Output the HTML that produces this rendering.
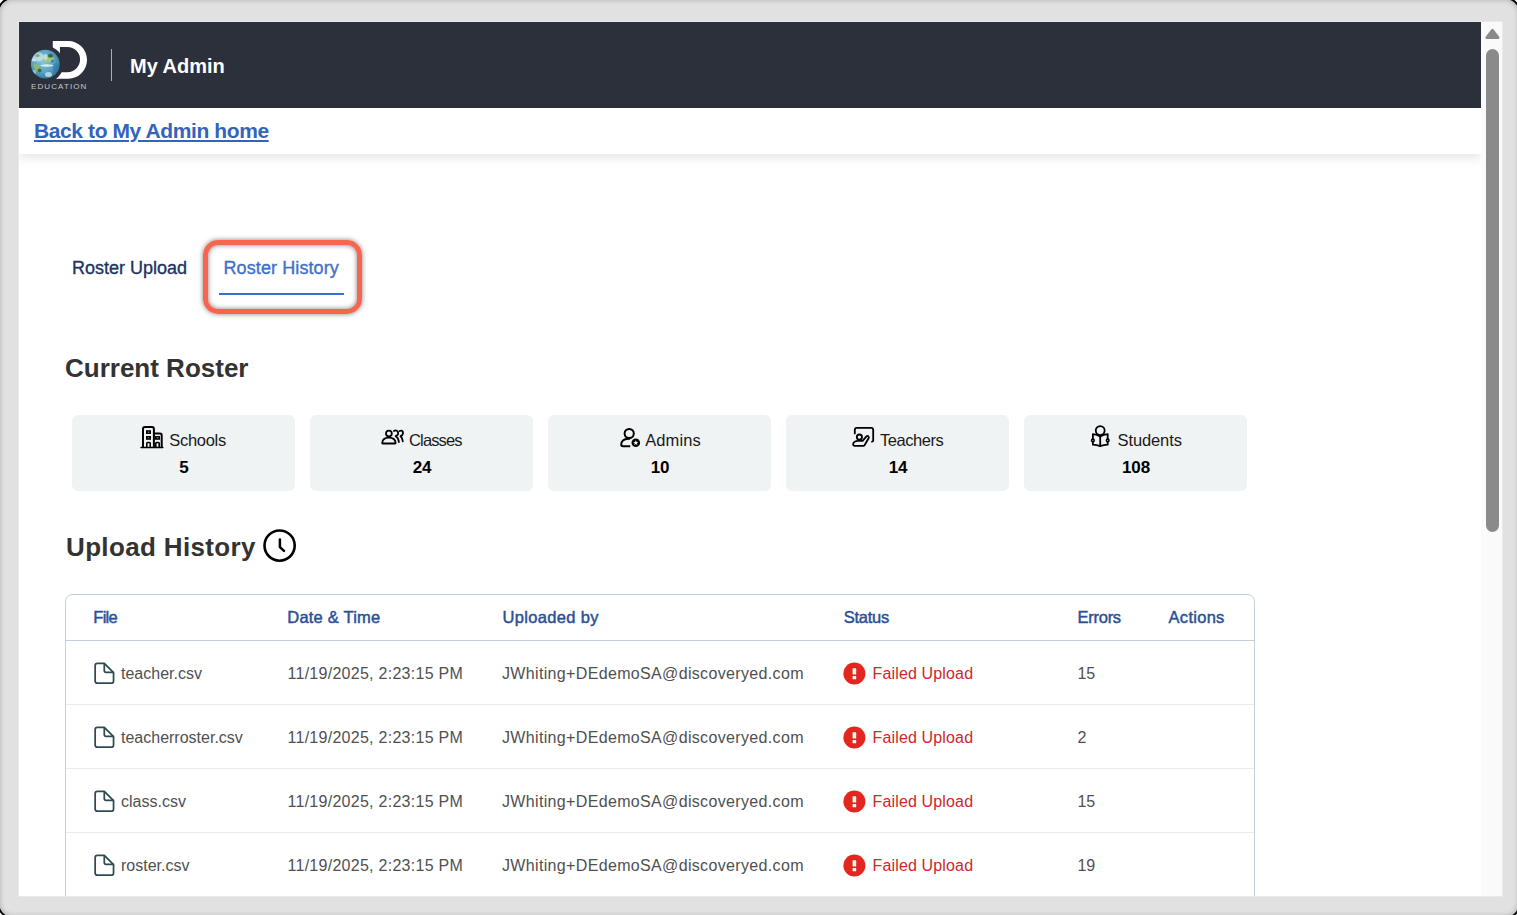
<!DOCTYPE html>
<html><head><meta charset="utf-8">
<style>
*{box-sizing:border-box;margin:0;padding:0}
html,body{width:1517px;height:915px;overflow:hidden;background:#fff;font-family:"Liberation Sans",sans-serif}
#frame{position:absolute;left:-3.5px;top:-3.5px;width:1524px;height:922px;background:#e1e1e1;border:2.2px solid #000;border-radius:16px;box-shadow:inset 0 0 5px 1px rgba(0,0,0,.22)}
#win{position:absolute;left:0;top:0;width:1517px;height:915px;clip-path:inset(22px 15px 19px 19px)}
#white{position:absolute;left:19px;top:22px;width:1483px;height:874px;background:#fff}
#edge{position:absolute;left:18px;top:21px;width:1485px;height:876px;border:1px solid #e9e9e9}
.a{position:absolute;white-space:nowrap;line-height:1}
svg{position:absolute;overflow:visible}
.card{position:absolute;top:415px;width:223px;height:76px;background:#f0f3f4;border-radius:6px}
.lbl{font-size:16.5px;color:#1a1a1a}
.num{font-size:17px;font-weight:700;color:#000}
.th{font-size:16.5px;font-weight:400;color:#2a4f96;-webkit-text-stroke:0.45px #2a4f96}
.td{font-size:16px;color:#505050}
.fail{font-size:16px;color:#d0262a}
</style></head><body>
<div id="frame"></div><div id="edge"></div>
<div id="win">
  <div id="white"></div>
  <!-- header -->
  <div class="a" style="left:19px;top:22px;width:1462px;height:86px;background:#2c303b"></div>
  <svg style="left:0;top:0" width="100" height="100" viewBox="0 0 100 100">
    <defs>
      <radialGradient id="gl" cx="0.42" cy="0.4" r="0.65">
        <stop offset="0" stop-color="#8cc6da"/>
        <stop offset="0.6" stop-color="#56a2c6"/>
        <stop offset="1" stop-color="#2d729a"/>
      </radialGradient>
      <mask id="dm">
        <rect x="0" y="0" width="100" height="100" fill="#fff"/>
        <circle cx="45.3" cy="64.1" r="18.3" fill="#000"/>
      </mask>
      <clipPath id="gc"><circle cx="45.3" cy="64.1" r="14.4"/></clipPath>
      <filter id="gb" x="-20%" y="-20%" width="140%" height="140%"><feGaussianBlur stdDeviation="0.55"/></filter>
    </defs>
    <path mask="url(#dm)" fill="#fff" fill-rule="evenodd" d="M52.8 41 H68.2 A18.85 18.85 0 0 1 68.2 78.7 H50 V60 H52.8 Z M59.9 46.9 H67.4 A12.65 12.65 0 0 1 67.4 72.2 H55 V60 H59.9 Z"/>
    <circle cx="45.3" cy="64.1" r="14.4" fill="url(#gl)"/>
    <g clip-path="url(#gc)"><g filter="url(#gb)">
      <ellipse cx="38" cy="57" rx="6" ry="4.5" fill="#e2f0f0" opacity=".6"/>
      <ellipse cx="37.5" cy="55.5" rx="2.2" ry="1.5" fill="#7ea85a" opacity=".85"/>
      <ellipse cx="33.5" cy="60" rx="2" ry="1.6" fill="#e6f2f2" opacity=".7"/>
      <ellipse cx="49" cy="59.5" rx="5" ry="2.6" transform="rotate(-15 49 59.5)" fill="#a3c67c"/>
      <ellipse cx="45.5" cy="57" rx="2" ry="3" fill="#cfe6d8" opacity=".8"/>
      <ellipse cx="50.5" cy="55.8" rx="2.6" ry="2" fill="#3e6b35"/>
      <ellipse cx="52.5" cy="61" rx="1.5" ry="1.5" fill="#3d7fa0"/>
      <ellipse cx="47" cy="65.5" rx="6.5" ry="1.2" fill="#eef7f8" opacity=".85"/>
      <ellipse cx="37" cy="68" rx="2.4" ry="4.5" transform="rotate(-30 37 68)" fill="#8fb86a"/>
      <ellipse cx="39.5" cy="70.5" rx="2" ry="2" fill="#3f6e34"/>
      <ellipse cx="48.5" cy="74.5" rx="3.5" ry="2.5" fill="#d4e8ec" opacity=".75"/>
      <ellipse cx="34" cy="72" rx="2" ry="2" fill="#cfe5ea" opacity=".6"/>
      <ellipse cx="56" cy="68" rx="3" ry="5" fill="#2f74a0" opacity=".5"/>
    </g></g>
  </svg>
  <div class="a" style="left:31px;top:83px;font-size:8px;letter-spacing:1.1px;color:#c8c8c8">EDUCATION</div>
  <div class="a" style="left:111px;top:49px;width:1px;height:32px;background:#9fb2ba"></div>
  <div class="a" style="left:130px;top:55.8px;font-size:20px;font-weight:700;color:#fff">My Admin</div>

  <!-- link bar -->
  <div class="a" style="left:19px;top:108px;width:1462px;height:46px;background:#fff;box-shadow:0 4px 10px rgba(0,0,0,.10)"></div>
  <div class="a" style="left:34px;top:120px;font-size:21px;letter-spacing:-0.4px;font-weight:700;color:#3264bb;text-decoration:underline;text-decoration-thickness:2px;text-underline-offset:2px">Back to My Admin home</div>

  <!-- scrollbar -->
  <div class="a" style="left:1481px;top:22px;width:21px;height:874px;background:#fafafa"></div>
  <svg style="left:1485px;top:28px" width="15" height="12" viewBox="0 0 15 12"><path d="M7.45 2.4 L13 9.6 L1.9 9.6 Z" fill="#8a8a8a" stroke="#8a8a8a" stroke-width="3" stroke-linejoin="round"/></svg>
  <div class="a" style="left:1486px;top:49px;width:13px;height:483px;background:#8a8a8a;border-radius:6.5px"></div>

  <!-- tabs -->
  <div class="a" style="left:72px;top:258.6px;font-size:18px;color:#1d3461;-webkit-text-stroke:0.35px #1d3461">Roster Upload</div>
  <div class="a" style="left:223.5px;top:258.6px;font-size:18px;color:#3d70cc;letter-spacing:0.1px;-webkit-text-stroke:0.35px #3d70cc">Roster History</div>
  <div class="a" style="left:219px;top:293px;width:125px;height:2px;background:#3a6fd4"></div>
  <div class="a" style="left:203px;top:240px;width:159px;height:74px;border:5px solid #f7654f;border-radius:15px;box-shadow:0 0 5px rgba(0,0,0,.5),inset 0 0 5px rgba(0,0,0,.5)"></div>

  <div class="a" style="left:65px;top:354.7px;font-size:26px;font-weight:700;color:#333">Current Roster</div>

  <!-- cards -->
  <div class="card" style="left:72px"></div>
  <div class="card" style="left:310px"></div>
  <div class="card" style="left:548px"></div>
  <div class="card" style="left:786px"></div>
  <div class="card" style="left:1024px"></div>

  <div class="a lbl" style="left:169.3px;top:432px;letter-spacing:-0.3px">Schools</div>
  <div class="a lbl" style="left:409px;top:432px;letter-spacing:-0.85px">Classes</div>
  <div class="a lbl" style="left:645.3px;top:432px;letter-spacing:0.07px">Admins</div>
  <div class="a lbl" style="left:880px;top:432px;letter-spacing:-0.47px">Teachers</div>
  <div class="a lbl" style="left:1117.5px;top:432px;letter-spacing:-0.1px">Students</div>

  <div class="a num" style="left:72px;width:223px;text-align:center;top:458.6px;padding-left:1.2px">5</div>
  <div class="a num" style="left:310px;width:223px;text-align:center;top:458.6px;padding-left:1.2px">24</div>
  <div class="a num" style="left:548px;width:223px;text-align:center;top:458.6px;padding-left:1.2px">10</div>
  <div class="a num" style="left:786px;width:223px;text-align:center;top:458.6px;padding-left:1.2px">14</div>
  <div class="a num" style="left:1024px;width:223px;text-align:center;top:458.6px;padding-left:1.2px">108</div>

  <!-- card icons -->
  <svg style="left:140px;top:425px" width="24" height="24" viewBox="0 0 24 24" fill="none" stroke="#000" stroke-width="2">
    <path d="M3 22 V4 Q3 2.1 4.9 2.1 H12 Q13.9 2.1 13.9 4 V22"/>
    <path d="M13.9 8.6 H19.9 Q21.7 8.6 21.7 10.4 V22"/>
    <path d="M1.1 22.5 H22.8" stroke-width="1.6" stroke-linecap="round"/>
    <rect x="6.8" y="6" width="3.4" height="2.2" stroke-width="1.6"/>
    <rect x="6.8" y="11.8" width="3.4" height="2.2" stroke-width="1.6"/>
    <rect x="15.8" y="11.8" width="3.4" height="2.2" stroke-width="1.6"/>
    <path d="M6.8 22 V18.2 Q6.8 17.5 7.5 17.5 H9.5 Q10.2 17.5 10.2 18.2 V22 M15.8 22 V18.2 Q15.8 17.5 16.5 17.5 H18.5 Q19.2 17.5 19.2 18.2 V22" stroke-width="1.6"/>
  </svg>
  <svg style="left:377px;top:423px" width="30" height="28" viewBox="0 0 30 28" fill="none" stroke="#000" stroke-width="1.8" stroke-linecap="round" stroke-linejoin="round">
    <circle cx="11.9" cy="10.6" r="2.9"/>
    <path d="M5.2 20.1 Q5.5 14.6 11.9 14.6 Q18.3 14.6 18.6 20.1 Q18.6 20.5 18.2 20.5 H5.6 Q5.2 20.5 5.2 20.1 Z"/>
    <path d="M16.9 8 Q18.2 7.2 19.6 7.6 Q21.2 8.3 21.2 10.2 Q21.1 12.3 18.6 13.1 Q21.3 14.8 21.9 19"/>
    <path d="M22.7 8 Q23.8 7.4 25 7.8 Q26.2 8.5 26 10.4 Q25.8 12.3 23.5 13.1 Q25.4 14.8 25.8 18.4"/>
  </svg>
  <svg style="left:620px;top:427.8px" width="22" height="21" viewBox="0 0 22 21" fill="none" stroke="#000" stroke-width="2">
    <circle cx="9.2" cy="5.5" r="4.6"/>
    <path d="M10.2 10.8 H8.5 Q1 11 1.2 17 Q1.4 18.2 3 18.3 H10.2"/>
    <circle cx="15.8" cy="14.8" r="4.3" fill="#000" stroke="none"/>
    <path d="M15.8 12.2 L16.5 13.9 L18.3 14 L16.9 15.1 L17.4 16.9 L15.8 15.9 L14.2 16.9 L14.7 15.1 L13.3 14 L15.1 13.9 Z" fill="#fff" stroke="none"/>
  </svg>
  <svg style="left:849px;top:423px" width="28" height="28" viewBox="0 0 28 28" fill="none" stroke="#000" stroke-width="1.8" stroke-linecap="round" stroke-linejoin="round">
    <path d="M5.8 10.4 V6.9 Q5.8 4.9 7.8 4.9 H22.2 Q24.2 4.9 24.2 6.9 V17.6 Q24.2 18.7 23 18.7"/>
    <circle cx="10.4" cy="14.1" r="2.6"/>
    <path d="M9 17.8 H13.6 L17.2 13.6 Q18.3 12.5 19.4 13.3 Q20.3 14.1 19.6 15.3 L15.7 22 Q15.2 22.8 14.3 22.8 H5.8 Q4.1 22.8 4.1 21.2 Q4.1 19.6 5.6 18.7 Q7 17.8 9 17.8 Z"/>
  </svg>
  <svg style="left:1086px;top:422px" width="28" height="28" viewBox="0 0 28 28" fill="none" stroke="#000" stroke-width="1.8">
    <circle cx="14.2" cy="8.6" r="4.45"/>
    <path d="M6.9 12.2 Q11 12.4 14.2 14.6 Q17.4 12.4 21.7 12.2 V22.7 Q17.4 22.9 14.2 24.2 Q11 22.9 6.9 22.7 Z" stroke-linejoin="round"/>
    <path d="M14.2 14.6 V24.2"/>
    <circle cx="6.9" cy="18.4" r="1.3" fill="#f0f3f4" stroke-width="1.6"/>
    <circle cx="21.7" cy="18.4" r="1.3" fill="#f0f3f4" stroke-width="1.6"/>
  </svg>

  <!-- upload history -->
  <div class="a" style="left:66px;top:533.7px;font-size:26px;letter-spacing:0.35px;font-weight:700;color:#333">Upload History</div>
  <svg style="left:263px;top:529px" width="34" height="34" viewBox="0 0 34 34" fill="none" stroke="#000">
    <circle cx="16.6" cy="16.6" r="15.1" stroke-width="2.6"/>
    <path d="M16.9 10.6 V18.1 L21 21.9" stroke-width="2.5" stroke-linecap="round" stroke-linejoin="round"/>
  </svg>

  <!-- table -->
  <div class="a" style="left:65px;top:594px;width:1190px;height:400px;border:1px solid #c3ced6;border-radius:7.5px"></div>
  <div class="a" style="left:66px;top:640px;width:1188px;height:1px;background:#c3ced6"></div>
  <div class="a" style="left:66px;top:704px;width:1188px;height:1px;background:#e8ecef"></div>
  <div class="a" style="left:66px;top:768px;width:1188px;height:1px;background:#e8ecef"></div>
  <div class="a" style="left:66px;top:832px;width:1188px;height:1px;background:#e8ecef"></div>

  <div class="a th" style="left:93.3px;top:609px;letter-spacing:-0.75px">File</div>
  <div class="a th" style="left:287.3px;top:609px;letter-spacing:0.21px">Date &amp; Time</div>
  <div class="a th" style="left:502.6px;top:609px;letter-spacing:0.33px">Uploaded by</div>
  <div class="a th" style="left:843.7px;top:609px;letter-spacing:-0.26px">Status</div>
  <div class="a th" style="left:1077.6px;top:609px;letter-spacing:-0.28px">Errors</div>
  <div class="a th" style="left:1168.6px;top:609px;letter-spacing:0.27px">Actions</div>

    <svg style="left:93px;top:661.7px" width="23" height="24" viewBox="0 0 23 24" fill="none" stroke="#2f4a52" stroke-width="1.75" stroke-linejoin="round"><path d="M4.4 1.45 H11.3 L20.55 10.7 V18.9 Q20.55 21.15 18.3 21.15 H4.4 Q2.15 21.15 2.15 18.9 V3.7 Q2.15 1.45 4.4 1.45Z"/><path d="M11.3 1.45 V8.6 Q11.3 10.4 13.1 10.4 H20.55"/></svg>
  <div class="a td" style="left:121px;top:665.656px">teacher.csv</div>
  <div class="a td" style="left:287.5px;top:665.656px;letter-spacing:0.27px">11/19/2025, 2:23:15 PM</div>
  <div class="a td" style="left:502px;top:665.656px;letter-spacing:0.34px">JWhiting+DEdemoSA@discoveryed.com</div>
  <svg style="left:842.5px;top:662.2px" width="23" height="23" viewBox="0 0 23 23"><circle cx="11.4" cy="11.5" r="11" fill="#e1271f"/><rect x="9.6" y="6.3" width="3.6" height="6.1" rx="0.4" fill="#fff"/><rect x="9.6" y="13.9" width="3.6" height="3.3" rx="0.4" fill="#fff"/></svg>
  <div class="a fail" style="left:872.5px;top:665.656px;letter-spacing:0.15px">Failed Upload</div>
  <div class="a td" style="left:1077.4px;top:665.656px">15</div>
  <svg style="left:93px;top:725.7px" width="23" height="24" viewBox="0 0 23 24" fill="none" stroke="#2f4a52" stroke-width="1.75" stroke-linejoin="round"><path d="M4.4 1.45 H11.3 L20.55 10.7 V18.9 Q20.55 21.15 18.3 21.15 H4.4 Q2.15 21.15 2.15 18.9 V3.7 Q2.15 1.45 4.4 1.45Z"/><path d="M11.3 1.45 V8.6 Q11.3 10.4 13.1 10.4 H20.55"/></svg>
  <div class="a td" style="left:121px;top:729.656px">teacherroster.csv</div>
  <div class="a td" style="left:287.5px;top:729.656px;letter-spacing:0.27px">11/19/2025, 2:23:15 PM</div>
  <div class="a td" style="left:502px;top:729.656px;letter-spacing:0.34px">JWhiting+DEdemoSA@discoveryed.com</div>
  <svg style="left:842.5px;top:726.2px" width="23" height="23" viewBox="0 0 23 23"><circle cx="11.4" cy="11.5" r="11" fill="#e1271f"/><rect x="9.6" y="6.3" width="3.6" height="6.1" rx="0.4" fill="#fff"/><rect x="9.6" y="13.9" width="3.6" height="3.3" rx="0.4" fill="#fff"/></svg>
  <div class="a fail" style="left:872.5px;top:729.656px;letter-spacing:0.15px">Failed Upload</div>
  <div class="a td" style="left:1077.4px;top:729.656px">2</div>
  <svg style="left:93px;top:789.7px" width="23" height="24" viewBox="0 0 23 24" fill="none" stroke="#2f4a52" stroke-width="1.75" stroke-linejoin="round"><path d="M4.4 1.45 H11.3 L20.55 10.7 V18.9 Q20.55 21.15 18.3 21.15 H4.4 Q2.15 21.15 2.15 18.9 V3.7 Q2.15 1.45 4.4 1.45Z"/><path d="M11.3 1.45 V8.6 Q11.3 10.4 13.1 10.4 H20.55"/></svg>
  <div class="a td" style="left:121px;top:793.656px">class.csv</div>
  <div class="a td" style="left:287.5px;top:793.656px;letter-spacing:0.27px">11/19/2025, 2:23:15 PM</div>
  <div class="a td" style="left:502px;top:793.656px;letter-spacing:0.34px">JWhiting+DEdemoSA@discoveryed.com</div>
  <svg style="left:842.5px;top:790.2px" width="23" height="23" viewBox="0 0 23 23"><circle cx="11.4" cy="11.5" r="11" fill="#e1271f"/><rect x="9.6" y="6.3" width="3.6" height="6.1" rx="0.4" fill="#fff"/><rect x="9.6" y="13.9" width="3.6" height="3.3" rx="0.4" fill="#fff"/></svg>
  <div class="a fail" style="left:872.5px;top:793.656px;letter-spacing:0.15px">Failed Upload</div>
  <div class="a td" style="left:1077.4px;top:793.656px">15</div>
  <svg style="left:93px;top:853.7px" width="23" height="24" viewBox="0 0 23 24" fill="none" stroke="#2f4a52" stroke-width="1.75" stroke-linejoin="round"><path d="M4.4 1.45 H11.3 L20.55 10.7 V18.9 Q20.55 21.15 18.3 21.15 H4.4 Q2.15 21.15 2.15 18.9 V3.7 Q2.15 1.45 4.4 1.45Z"/><path d="M11.3 1.45 V8.6 Q11.3 10.4 13.1 10.4 H20.55"/></svg>
  <div class="a td" style="left:121px;top:857.656px">roster.csv</div>
  <div class="a td" style="left:287.5px;top:857.656px;letter-spacing:0.27px">11/19/2025, 2:23:15 PM</div>
  <div class="a td" style="left:502px;top:857.656px;letter-spacing:0.34px">JWhiting+DEdemoSA@discoveryed.com</div>
  <svg style="left:842.5px;top:854.2px" width="23" height="23" viewBox="0 0 23 23"><circle cx="11.4" cy="11.5" r="11" fill="#e1271f"/><rect x="9.6" y="6.3" width="3.6" height="6.1" rx="0.4" fill="#fff"/><rect x="9.6" y="13.9" width="3.6" height="3.3" rx="0.4" fill="#fff"/></svg>
  <div class="a fail" style="left:872.5px;top:857.656px;letter-spacing:0.15px">Failed Upload</div>
  <div class="a td" style="left:1077.4px;top:857.656px">19</div>
</div>
</body></html>
